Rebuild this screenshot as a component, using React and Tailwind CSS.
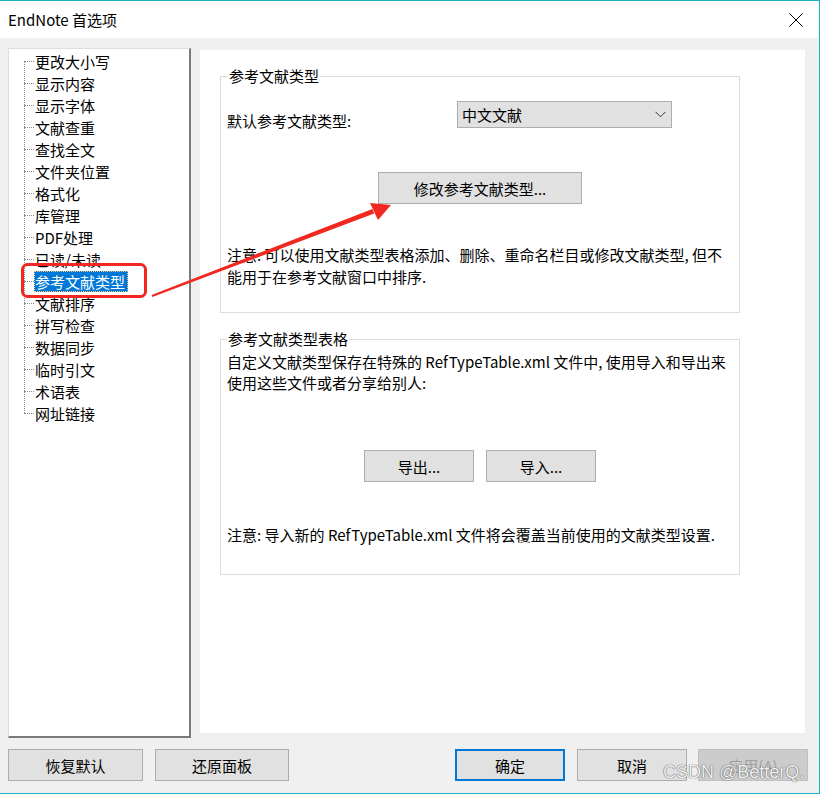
import React from "react";

const treeItems = [
  "更改大小写",
  "显示内容",
  "显示字体",
  "文献查重",
  "查找全文",
  "文件夹位置",
  "格式化",
  "库管理",
  "PDF处理",
  "已读/未读",
  "参考文献类型",
  "文献排序",
  "拼写检查",
  "数据同步",
  "临时引文",
  "术语表",
  "网址链接",
];

const Btn = ({ children, className = "", border = "border border-[#adadad]" }) => (
  <button className={`h-[32px] bg-[#e1e1e1] ${border} text-[15px] leading-none text-black ${className}`}>
    {children}
  </button>
);

const Group = ({ title, legendClass, children, className = "" }) => (
  <fieldset className={`w-[520px] ml-[20px] border border-[#dcdcdc] p-0 m-0 ${className}`}>
    <legend className={`px-[1px] text-[15px] leading-[20px] ${legendClass}`}>{title}</legend>
    {children}
  </fieldset>
);

export default function App() {
  return (
    <div className="relative w-[821px] h-[795px] bg-white font-['Noto_Sans_CJK_SC','Noto_Sans',sans-serif] text-black">
      {/* window */}
      <div className="w-[820px] h-[794px] border-t border-r border-b border-[#1ab3c4] bg-[#f0f0f0] flex flex-col">
        {/* title bar */}
        <div className="h-[37px] bg-white flex items-center justify-between pl-[8px] pr-[16px]">
          <span className="text-[15px] leading-none">EndNote 首选项</span>
          <svg width="14" height="14" viewBox="0 0 14 14">
            <path d="M0.5 0.5 L13.5 13.5 M13.5 0.5 L0.5 13.5" stroke="#000" strokeWidth="1" fill="none" />
          </svg>
        </div>

        <div className="pl-[8px] pt-[10px]">
          <div className="flex items-start">
            {/* tree pane */}
            <div className="w-[183px] h-[690px] bg-white border-l border-t border-[#dedede] border-r-2 border-b-2 border-r-[#7a7a7a] border-b-[#7a7a7a] pt-[1px]">
              <ul className="relative">
                <span className="absolute left-[15px] top-[11px] bottom-[11px] w-0 border-l border-dotted border-[#8a8a8a]" />
                {treeItems.map((item) => {
                  const selected = item === "参考文献类型";
                  return (
                    <li key={item} className="h-[22px] flex items-center pl-[15px]">
                      <span className="w-[10px] h-0 border-t border-dotted border-[#8a8a8a]" />
                      <span
                        className={`text-[15px] leading-[21px] pl-[1px] pr-[3px] whitespace-nowrap ${
                          selected
                            ? "bg-[#0078d7] text-white outline-1 outline-dotted outline-[#f3c97a] -outline-offset-1"
                            : ""
                        }`}
                      >
                        {item}
                      </span>
                    </li>
                  );
                })}
              </ul>
            </div>

            {/* right panel */}
            <div className="w-[605px] h-[683px] ml-[9px] mt-[2px] bg-white pt-[16px]">
              <Group title="参考文献类型" legendClass="ml-[7px]">
                <div className="px-[6px] pt-[15px] pb-[24px]">
                  <div className="flex items-start">
                    <span className="w-[230px] mt-[10px] text-[15px] leading-[20px]">默认参考文献类型:</span>
                    <div className="w-[215px] h-[27px] bg-[#e1e1e1] border border-[#adadad] flex items-center justify-between pl-[4px] pr-[5px]">
                      <span className="text-[15px] leading-none">中文文献</span>
                      <svg width="11" height="7" viewBox="0 0 11 7">
                        <path d="M0.5 0.8 L5.5 5.8 L10.5 0.8" stroke="#333" strokeWidth="1" fill="none" />
                      </svg>
                    </div>
                  </div>
                  <div className="flex justify-center mt-[41px]">
                    <Btn className="w-[204px]">修改参考文献类型...</Btn>
                  </div>
                  <p className="mt-[40px] text-[15px] leading-[22px] whitespace-nowrap">
                    注意: 可以使用文献类型表格添加、删除、重命名栏目或修改文献类型, 但不
                    <br />
                    能用于在参考文献窗口中排序.
                  </p>
                </div>
              </Group>

              <Group title="参考文献类型表格" legendClass="ml-[6px]" className="mt-[16px]">
                <div className="px-[6px] pt-[2px] pb-[29px]">
                  <p className="text-[15px] leading-[21px] whitespace-nowrap">
                    自定义文献类型保存在特殊的 RefTypeTable.xml 文件中, 使用导入和导出来
                    <br />
                    使用这些文件或者分享给别人:
                  </p>
                  <div className="flex justify-center gap-[12px] mt-[57px]">
                    <Btn className="w-[110px]">导出...</Btn>
                    <Btn className="w-[110px]">导入...</Btn>
                  </div>
                  <p className="mt-[42px] text-[15px] leading-[21px] whitespace-nowrap">
                    注意: 导入新的 RefTypeTable.xml 文件将会覆盖当前使用的文献类型设置.
                  </p>
                </div>
              </Group>
            </div>
          </div>

          {/* bottom buttons */}
          <div className="flex items-center mt-[11px]">
            <Btn className="w-[135px]">恢复默认</Btn>
            <Btn className="w-[134px] ml-[12px]">还原面板</Btn>
            <Btn className="w-[110px] ml-[166px]" border="border-2 border-[#0078d7]">
              确定
            </Btn>
            <Btn className="w-[110px] ml-[12px]">取消</Btn>
            <button className="w-[110px] h-[32px] ml-[11px] bg-[#cccccc] border border-[#bfbfbf] text-[15px] leading-none text-[#a0a0a0]">
              应用(A)
            </button>
          </div>
        </div>
      </div>

      {/* annotation overlay */}
      <svg className="absolute inset-0 pointer-events-none" width="821" height="795" viewBox="0 0 821 795">
        <rect x="22.5" y="264.5" width="123" height="32" rx="5" ry="5" fill="none" stroke="#f0281f" strokeWidth="3" />
        <polygon points="152.4,297.1 151.6,294.9 372.4,208.9 374.2,213.5" fill="#f0281f" />
        <polygon points="391,205 370,203 378,220" fill="#f0281f" />
      </svg>

      {/* watermark */}
      <span className="absolute left-[663px] top-[760px] text-[18px] leading-[24px] font-['Liberation_Sans',sans-serif] text-[#f2f2f2] [text-shadow:0_0_1px_#555,0_0_1px_#555]">
        CSDN @BetterQ.
      </span>
    </div>
  );
}
